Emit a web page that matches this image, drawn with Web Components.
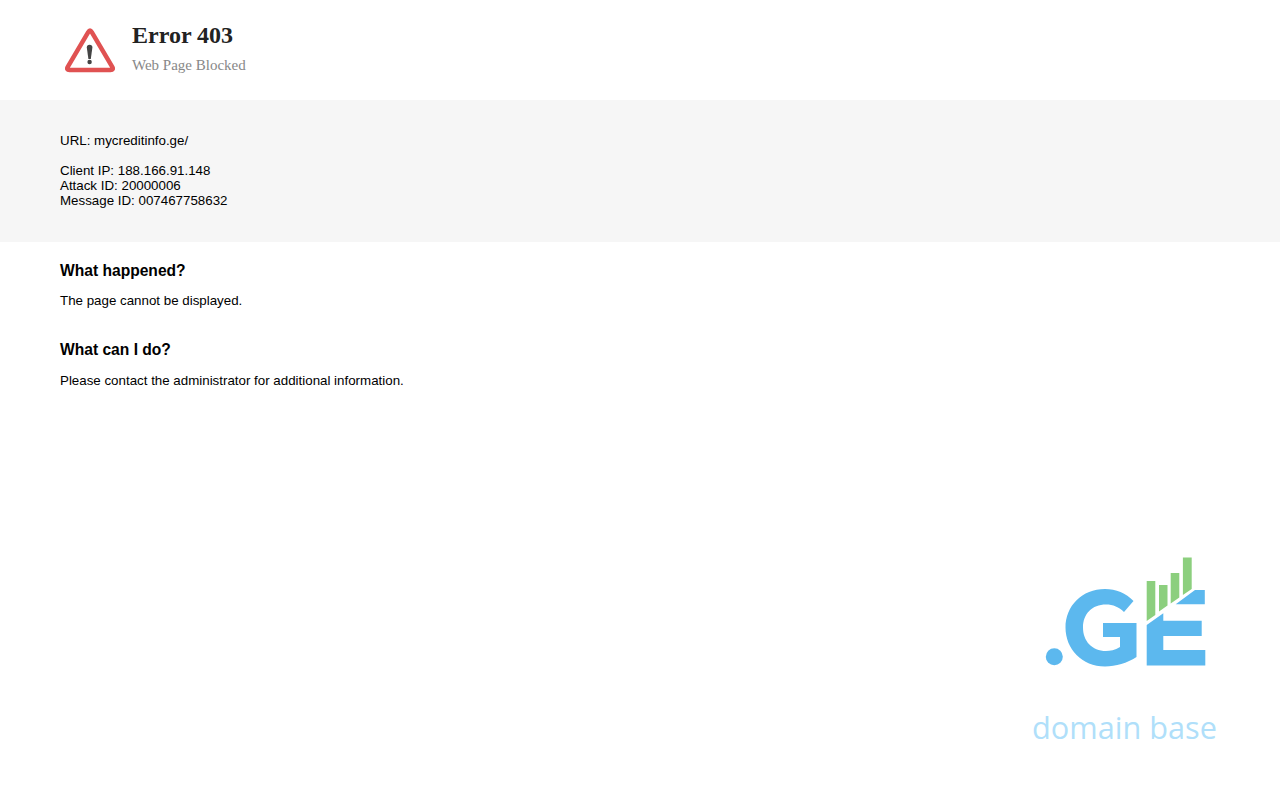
<!DOCTYPE html>
<html>
<head>
<meta charset="utf-8">
<title>Error 403</title>
<style>
html, body { margin: 0; padding: 0; background: #fff; }
body { height: 800px; overflow: hidden; position: relative; font-family: "Liberation Sans", Arial, sans-serif; }
</style>
</head>
<body>
<block-header title="Error 403" subtitle="Web Page Blocked"></block-header>
<block-details>
  <p>URL: mycreditinfo.ge/</p>
  <p>Client IP: 188.166.91.148<br>Attack ID: 20000006<br>Message ID: 007467758632</p>
</block-details>
<block-section heading="What happened?">The page cannot be displayed.</block-section>
<block-section heading="What can I do?" class="second">Please contact the administrator for additional information.</block-section>
<ge-logo></ge-logo>

<script>
class BlockHeader extends HTMLElement {
  constructor() {
    super()
    this.attachShadow({mode: "open"})
    this.shadowRoot.innerHTML = `
      <style>
      :host { display: flex; height: 100px; box-sizing: border-box; padding-left: 65px; font-family: "Liberation Serif", "Times New Roman", serif; }
      svg { width: 50px; height: 46px; margin-top: 27px; flex: none; }
      .text { margin-left: 17px; }
      h1 { margin: 20px 0 0; font-size: 24px; line-height: 30px; font-weight: bold; color: #222; }
      p { margin: 6px 0 0; font-size: 15px; line-height: 18px; color: #888; }
      </style>
      <svg viewBox="0 0 50 46">
        <path d="M26.760 5.020 L47.240 39.880 Q49 42.900 45.500 42.900 H4.500 Q1 42.900 2.760 39.880 L23.240 5.020 Q25 2 26.760 5.020 Z" fill="none" stroke="#e05252" stroke-width="4.5"/>
        <path d="M21.800 20.500 a2.800 2.800 0 0 1 5.600 0 L25.800 32 h-2.400 Z" fill="#444"/>
        <circle cx="24.600" cy="35" r="2.200" fill="#444"/>
      </svg>
      <div class="text">
        <h1>${this.getAttribute("title")}</h1>
        <p>${this.getAttribute("subtitle")}</p>
      </div>`
  }
}

class BlockDetails extends HTMLElement {
  constructor() {
    super()
    this.attachShadow({mode: "open"})
    this.shadowRoot.innerHTML = `
      <style>
      :host { display: block; height: 142px; box-sizing: border-box; padding: 33px 60px 0; background: #f6f6f6; color: #000; font-size: 13.33px; line-height: 15px; }
      ::slotted(p) { margin: 0 0 15px; }
      </style>
      <slot></slot>`
  }
}

class BlockSection extends HTMLElement {
  constructor() {
    super()
    this.attachShadow({mode: "open"})
    this.shadowRoot.innerHTML = `
      <style>
      :host { display: block; padding: 0 60px; color: #000; height: 79px; }
      :host(.second) p { margin-top: 14px; }
      h2 { margin: 0; padding-top: 19px; font-size: 15.6px; line-height: 19px; font-weight: bold; }
      p { margin: 13px 0 0; font-size: 13.33px; line-height: 15px; }
      </style>
      <h2>${this.getAttribute("heading")}</h2>
      <p><slot></slot></p>`
  }
}

class GeLogo extends HTMLElement {
  constructor() {
    super()
    this.attachShadow({mode: "open"})
    this.shadowRoot.innerHTML = `
      <style>
      :host { position: absolute; left: 1020px; top: 550px; width: 210px; height: 210px; display: block; }
      svg { position: absolute; left: 0; top: 0; }
      span { position: absolute; left: 12px; top: 157px; font-family: "Open Sans", sans-serif; font-size: 30.7px; line-height: 40px; color: #b0dffa; white-space: nowrap; }
      </style>
      <svg width="210" height="130" viewBox="1020 550 210 130">
        <circle cx="1054.300" cy="656.800" r="8.500" fill="#5cb8ee"/>
        <path d="M1133.500 601 C1126 593 1116 589 1105 589 C1082 589 1065.500 606 1065.500 627.500 C1065.500 649 1082 666.500 1105 666.500 C1116 666.500 1127 663 1136.500 657 V623 H1103 V637 H1120 V647 C1115 650 1110 651 1106 651 C1092 651 1083 641 1083 627.500 C1083 614 1092 604.500 1106 604.500 C1113 604.500 1119 607 1124 612 Z" fill="#5cb8ee"/>
        <path d="M1146.700 581 H1155.300 V615 L1146.700 621 Z M1159 585 H1167.500 V605.500 L1159 611.500 Z M1170.700 573 H1179.300 V597.500 L1170.700 603.500 Z M1182.900 557.500 H1191.700 V589 L1182.900 595 Z" fill="#8ccf7e"/>
        <path d="M1175.700 604.300 L1195 590 H1204.800 V604.300 Z M1146.700 625 L1163.300 613.300 V620.700 H1201.700 V636 H1163.300 V650 H1205.300 V665.500 H1146.700 Z" fill="#5cb8ee"/>
      </svg>
      <span>domain base</span>`
  }
}

window.customElements.define("block-header", BlockHeader)
window.customElements.define("block-details", BlockDetails)
window.customElements.define("block-section", BlockSection)
window.customElements.define("ge-logo", GeLogo)
</script>
</body>
</html>
